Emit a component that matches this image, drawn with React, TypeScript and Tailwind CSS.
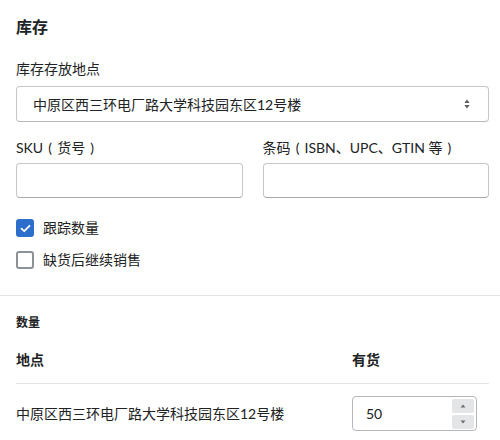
import React from "react";

const font = "font-['Lato','Noto_Sans_CJK_SC',sans-serif]";

// full-width paren drawn centred in a 14px cell, as in the reference font
const Paren = ({ c }: { c: string }) => <span className="inline-block w-[14px] text-center">{c}</span>;

const Checkbox = ({ checked, label }: { checked?: boolean; label: string }) => (
  <label className="flex h-[20px] items-center gap-[9px] text-[14px] leading-[20px]">
    {checked ? (
      <span className="flex h-[18px] w-[18px] items-center justify-center rounded-[3px] bg-[#2c6ecb]">
        <svg width="11" height="9" viewBox="0 0 11 9" fill="none">
          <path d="M1.5 4.6 4.2 7.2 9.5 1.8" stroke="white" strokeWidth="1.8" strokeLinecap="round" strokeLinejoin="round" />
        </svg>
      </span>
    ) : (
      <span className="h-[18px] w-[18px] rounded-[3px] border-2 border-[#8c9196] bg-white" />
    )}
    <span>{label}</span>
  </label>
);

const App = () => {
  return (
    <div className={`w-[500px] bg-white text-[#202223] ${font}`}>
      <section className="pl-4 pr-[11px] pt-[17px] pb-[25px]">
        <h2 className="text-[16px] font-semibold leading-[20px]">库存</h2>

        <div className="mt-[22px] text-[14px] leading-[20px]">库存存放地点</div>
        <div className="mt-[7px] flex h-[36px] items-center justify-between rounded-[4px] border border-[#c4c7ca] border-b-[#b3b7bb] pl-[16px] pr-[18px] text-[14px]">
          <span>中原区西三环电厂路大学科技园东区12号楼</span>
          <svg width="6" height="10" viewBox="0 0 6 10" fill="#5c5f62">
            <path d="M3 0.5 5.6 4 0.4 4Z" />
            <path d="M3 9.5 5.6 6 0.4 6Z" />
          </svg>
        </div>

        <div className="mt-[16px] grid grid-cols-2 gap-[20px]">
          <div>
            <div className="text-[14px] leading-[20px]">
              SKU<Paren c="(" />货号<Paren c=")" />
            </div>
            <div className="mt-[5px] h-[35px] rounded-[4px] border border-[#c4c7ca] border-b-[#a4a9ae]" />
          </div>
          <div>
            <div className="text-[14px] leading-[20px]">
              条码<Paren c="(" />ISBN、UPC、GTIN 等<Paren c=")" />
            </div>
            <div className="mt-[5px] h-[35px] rounded-[4px] border border-[#c4c7ca] border-b-[#a4a9ae]" />
          </div>
        </div>

        <div className="mt-[20px] flex flex-col gap-[12px]">
          <Checkbox checked label="跟踪数量" />
          <Checkbox label="缺货后继续销售" />
        </div>
      </section>

      <section className="border-t border-[#e1e3e5] pl-4 pr-[11px] pt-[17px]">
        <h3 className="text-[12px] font-semibold leading-[20px]">数量</h3>
        <div className="mt-[17px] flex border-b border-[#e1e3e5] pb-[13px] text-[14px] font-semibold leading-[20px]">
          <span className="flex-1">地点</span>
          <span className="w-[137px]">有货</span>
        </div>
        <div className="flex items-center pt-[12px] text-[14px]">
          <span className="flex-1">中原区西三环电厂路大学科技园东区12号楼</span>
          <div className="w-[137px]">
            <div className="flex h-[35px] w-[125px] items-center justify-between rounded-[4px] border border-[#b3b7bb] pl-[13px] pr-[2px]">
              <span>50</span>
              <div className="flex flex-col gap-[2px]">
                <span className="flex h-[14px] w-[22px] items-center justify-center rounded-[2px] bg-[#e4e5e7]">
                  <svg width="6" height="4" viewBox="0 0 6 4" fill="#6d7175">
                    <path d="M3 0.5 5.5 3.5 0.5 3.5Z" />
                  </svg>
                </span>
                <span className="flex h-[14px] w-[22px] items-center justify-center rounded-[2px] bg-[#e4e5e7]">
                  <svg width="6" height="4" viewBox="0 0 6 4" fill="#6d7175">
                    <path d="M3 3.5 5.5 0.5 0.5 0.5Z" />
                  </svg>
                </span>
              </div>
            </div>
          </div>
        </div>
      </section>
    </div>
  );
};

export default App;
